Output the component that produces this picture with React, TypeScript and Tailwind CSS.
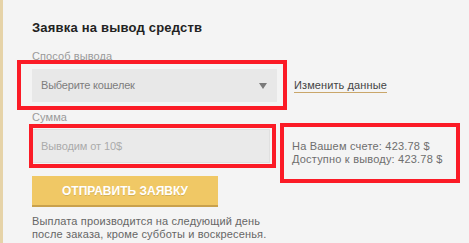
import React from 'react';

const font = { fontFamily: '"Liberation Sans", Arial, sans-serif' };

export default function App() {
  return (
    <div
      className="relative flex w-[469px] h-[243px] overflow-hidden bg-[#f4f4f4] text-[#555]"
      style={font}
    >
      {/* left accent stripe */}
      <div className="w-[3px] shrink-0 bg-[#e6d3a8]" />

      <div className="flex flex-col pl-[29px]">
        <h2 className="mt-[18px] text-[13px] leading-[20px] font-bold text-[#222] tracking-[0.2px]">
          Заявка на вывод средств
        </h2>

        <label className="mt-[10px] text-[11px] leading-[16px] text-[#9a9a9a] tracking-[0.1px]">
          Способ вывода
        </label>
        <div className="mt-[5px] flex items-center">
          <div className="flex items-center justify-between w-[245px] h-[33px] bg-[#e8e8e8] pl-[9px] pr-[10px]">
            <span className="text-[11px] text-[#7d7d7d] tracking-[-0.2px]">Выберите кошелек</span>
            <svg width="8" height="6" viewBox="0 0 8 6">
              <path d="M0 0 H8 L4 6 Z" fill="#7a7a7a" />
            </svg>
          </div>
          <a className="ml-[17px] text-[11px] leading-[13px] text-[#444] tracking-[0.1px] border-b border-[#c9a66a]">
            Изменить данные
          </a>
        </div>

        <label className="mt-[7px] text-[11px] leading-[16px] text-[#9a9a9a] tracking-[0.1px]">
          Сумма
        </label>
        <div className="mt-[4px] flex items-start">
          <div className="flex items-center w-[238px] h-[34px] bg-[#eaeaea] border border-[#e0e0e0] pl-[8px]">
            <span className="text-[11px] text-[#ababab] tracking-[-0.1px]">Выводим от 10$</span>
          </div>
          <div className="ml-[22px] mt-[11px] flex flex-col text-[11px] leading-[13px] text-[#6e6e6e] tracking-[0.2px]">
            <span>На Вашем счете: 423.78 $</span>
            <span>Доступно к выводу: 423.78 $</span>
          </div>
        </div>

        <button
          type="button"
          className="mt-[10px] w-[186px] h-[31px] bg-[#f0c865] border-b-2 border-[#c9a14c] text-white text-[12px] font-bold [text-shadow:0_1px_0_rgba(0,0,0,0.12)]"
        >
          ОТПРАВИТЬ ЗАЯВКУ
        </button>

        <p className="mt-[8px] text-[11px] leading-[13px] text-[#666] tracking-[0.15px]">
          Выплата производится на следующий день
          <br />
          после заказа, кроме субботы и воскресенья.
        </p>
      </div>

      {/* red annotation frames */}
      <div className="absolute left-[17px] top-[60px] w-[270px] h-[50px] border-4 border-[#fb1b26]" />
      <div className="absolute left-[29px] top-[124px] w-[247px] h-[44px] border-4 border-[#fb1b26]" />
      <div className="absolute left-[280px] top-[123px] w-[180px] h-[60px] border-4 border-[#fb1b26]" />
    </div>
  );
}
